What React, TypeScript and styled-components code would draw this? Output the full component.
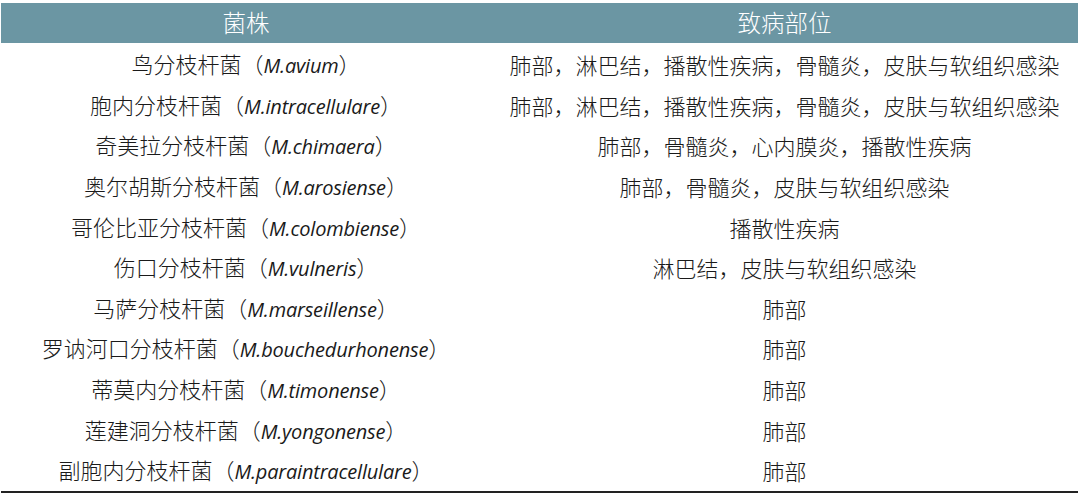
import React from 'react';
import styled, {createGlobalStyle} from 'styled-components';

const GlobalStyle = createGlobalStyle`
    html, body {
        margin: 0;
        padding: 0;
        background: #ffffff;
    }

    body {
        font-family: 'Noto Sans CJK SC', 'Noto Sans', sans-serif;
        color: #1a1a1a;
    }
`;

interface rowData {
    cn: string;
    latin: string;
    site: string;
}

const rows: rowData[] = [
    {cn: '鸟分枝杆菌', latin: 'M.avium', site: '肺部，淋巴结，播散性疾病，骨髓炎，皮肤与软组织感染'},
    {cn: '胞内分枝杆菌', latin: 'M.intracellulare', site: '肺部，淋巴结，播散性疾病，骨髓炎，皮肤与软组织感染'},
    {cn: '奇美拉分枝杆菌', latin: 'M.chimaera', site: '肺部，骨髓炎，心内膜炎，播散性疾病'},
    {cn: '奥尔胡斯分枝杆菌', latin: 'M.arosiense', site: '肺部，骨髓炎，皮肤与软组织感染'},
    {cn: '哥伦比亚分枝杆菌', latin: 'M.colombiense', site: '播散性疾病'},
    {cn: '伤口分枝杆菌', latin: 'M.vulneris', site: '淋巴结，皮肤与软组织感染'},
    {cn: '马萨分枝杆菌', latin: 'M.marseillense', site: '肺部'},
    {cn: '罗讷河口分枝杆菌', latin: 'M.bouchedurhonense', site: '肺部'},
    {cn: '蒂莫内分枝杆菌', latin: 'M.timonense', site: '肺部'},
    {cn: '莲建洞分枝杆菌', latin: 'M.yongonense', site: '肺部'},
    {cn: '副胞内分枝杆菌', latin: 'M.paraintracellulare', site: '肺部'},
];

const Table = styled.div`
    width: 1077px;
    margin: 3px 0 0 1px;
    border-bottom: 2px solid #222222;
`;

const Row = styled.div<{$header?: boolean}>`
    display: grid;
    grid-template-columns: 490px 1fr;
    height: ${props => (props.$header ? '40px' : '40.6px')};
    align-items: center;
    background: ${props => (props.$header ? '#6b96a3' : 'transparent')};
    color: ${props => (props.$header ? '#ffffff' : '#1a1a1a')};
    font-size: ${props => (props.$header ? '23.5px' : '22px')};
    font-weight: 300;
    margin-bottom: ${props => (props.$header ? '1px' : '0')};
`;

const Cell = styled.div`
    text-align: center;
    white-space: nowrap;
    line-height: 1;
`;

const Latin = styled.i`
    font-family: 'Open Sans', 'Noto Sans', sans-serif;
    font-style: italic;
    font-weight: 400;
    font-size: 20px;
    letter-spacing: -0.2px;
`;

const App = () => {
    return (
        <>
            <GlobalStyle />
            <Table>
                <Row $header>
                    <Cell>菌株</Cell>
                    <Cell>致病部位</Cell>
                </Row>
                {rows.map(row => (
                    <Row key={row.latin}>
                        <Cell>
                            {row.cn}（<Latin>{row.latin}</Latin>）
                        </Cell>
                        <Cell>{row.site}</Cell>
                    </Row>
                ))}
            </Table>
        </>
    );
};

export default App;
